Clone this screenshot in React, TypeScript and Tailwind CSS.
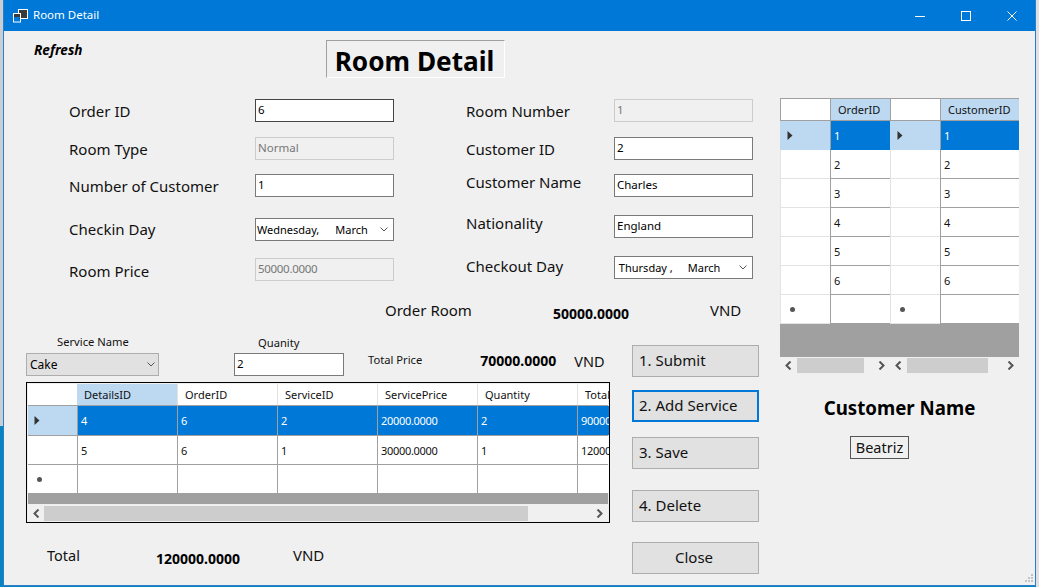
import React from "react";

const F = "font-['Noto_Sans','Open_Sans',sans-serif]";

function Tb({ v, off, w = "w-[139px]", dark, num }: { v: string; off?: boolean; w?: string; dark?: boolean; num?: boolean }) {
  return (
    <div className={`${w} h-[23px] border px-[2px] pb-[2px] flex items-center text-[11.5px] leading-none ${num ? "tracking-[-0.3px]" : ""} ${off ? "border-[#cccccc] bg-[#f0f0f0] text-[#777777]" : dark ? "border-[#444444] bg-white text-black" : "border-[#7a7a7a] bg-white text-black"}`}>
      {v}
    </div>
  );
}

function Chevron({ className = "" }: { className?: string }) {
  return (
    <svg width="8" height="5" viewBox="0 0 8 5" className={className} fill="none" stroke="#555555" strokeWidth="1">
      <path d="M0.5 0.5 L4 4 L7.5 0.5" />
    </svg>
  );
}

function DateBox({ a, b, gap }: { a: string; b: string; gap: string }) {
  return (
    <div className="w-[139px] h-[23px] border border-[#7a7a7a] bg-white flex items-center text-[11px] leading-none text-black pl-[1px] pr-[5px] whitespace-pre">
      <span>{a}</span>
      <span className={gap}>{b}</span>
      <Chevron className="ml-auto" />
    </div>
  );
}

function FormRow({ label, labelClass = "", w, mt, children }: { label: string; labelClass?: string; w: string; mt: string; children: React.ReactNode }) {
  return (
    <div className={`flex items-center h-[23px] ${mt}`}>
      <span className={`${w} text-[15px] leading-none whitespace-nowrap text-[#111111] ${labelClass}`}>{label}</span>
      {children}
    </div>
  );
}

function Arrow() {
  return (
    <svg width="6" height="9" viewBox="0 0 6 9">
      <path d="M0.5 0 L5.5 4.5 L0.5 9 Z" fill="#333333" />
    </svg>
  );
}

function Star() {
  return <span className="block w-[5px] h-[5px] ml-[3px] rounded-full bg-[#555555]" />;
}

function ScrollArrow({ dir }: { dir: "l" | "r" }) {
  return (
    <svg width="7" height="9" viewBox="0 0 7 9" fill="none" stroke="#555555" strokeWidth="2">
      <path d={dir === "l" ? "M5.5 0.5 L1.5 4.5 L5.5 8.5" : "M1.5 0.5 L5.5 4.5 L1.5 8.5"} />
    </svg>
  );
}

function SideGrid({ title, thumb, colW }: { title: string; thumb: string; colW: string }) {
  const rows = ["1", "2", "3", "4", "5", "6", ""];
  return (
    <div className={`flex flex-col ${colW}`}>
      <div className="h-[23px] flex border-y border-[#a0a0a0] bg-white shrink-0">
        <div className="w-[50px] shrink-0 border-l border-[#a0a0a0] bg-white" />
        <div className="flex-1 bg-[#bcd9f1] border-l border-[#a0a0a0] text-[11px] leading-none flex items-center pl-[7px] text-[#111111] whitespace-nowrap">{title}</div>
      </div>
      {rows.map((r, i) => (
        <div key={i} className="h-[29px] flex bg-white shrink-0">
          <div className={`w-[50px] shrink-0 border-l border-b flex items-center pl-[6px] ${i === 0 ? "bg-[#bcd9f1] border-[#bcd9f1]" : "border-[#e3e3e3]"}`}>
            {i === 0 ? <Arrow /> : i === 6 ? <Star /> : null}
          </div>
          <div className={`flex-1 border-l border-[#a0a0a0] border-b flex items-center pl-[3px] text-[11px] leading-none ${i === 0 ? "bg-[#0078d7] text-white border-b-[#0078d7]" : "border-b-[#a0a0a0] text-[#111111]"}`}>
            {r}
          </div>
        </div>
      ))}
      <div className="h-[33px] bg-[#a0a0a0] shrink-0" />
      <div className="h-[17px] flex items-center px-[5px] shrink-0 bg-[#f0f0f0]">
        <ScrollArrow dir="l" />
        <div className={`h-[15px] bg-[#cdcdcd] ml-[5px] ${thumb}`} />
        <span className="ml-auto"><ScrollArrow dir="r" /></span>
      </div>
    </div>
  );
}

function Cell({ w, className = "", children }: { w: string; className?: string; children?: React.ReactNode }) {
  return <div className={`${w} shrink-0 h-full flex items-center overflow-hidden whitespace-nowrap ${className}`}>{children}</div>;
}

function ServiceGrid() {
  const cols = ["w-[100px]", "w-[100px]", "w-[100px]", "w-[100px]", "w-[100px]", "w-[32px]"];
  const heads = ["DetailsID", "OrderID", "ServiceID", "ServicePrice", "Quantity", "Total"];
  const rows = [
    ["4", "6", "2", "20000.0000", "2", "90000.0000"],
    ["5", "6", "1", "30000.0000", "1", "120000.0000"],
    ["", "", "", "", "", ""],
  ];
  return (
    <div className="w-[584px] h-[141px] border border-black mt-[5px] p-[1px] flex flex-col bg-[#f0f0f0] text-[11px] leading-none text-[#111111]">
      <div className="h-[21px] flex bg-white shrink-0">
        <Cell w="w-[49px]" />
        {heads.map((h, i) => (
          <Cell key={h} w={cols[i]} className={`pl-[7px] ${i === 0 ? "bg-[#bcd9f1]" : "border-l border-[#e3e3e3]"}`}>{h}</Cell>
        ))}
      </div>
      {rows.map((r, ri) => (
        <div key={ri} className={`flex shrink-0 border-t border-[#a0a0a0] ${ri === 0 ? "h-[30px]" : "h-[29px] bg-white"}`}>
          <Cell w="w-[49px]" className={`pl-[6px] ${ri === 0 ? "bg-[#bcd9f1]" : "bg-white"}`}>
            {ri === 0 ? <Arrow /> : ri === 2 ? <Star /> : null}
          </Cell>
          {r.map((c, ci) => (
            <Cell key={ci} w={cols[ci]} className={`pl-[3px] border-l border-[#a0a0a0] ${c.length > 5 ? "tracking-[-0.3px]" : ""} ${ri === 0 ? "bg-[#0078d7] text-white" : "bg-white"}`}>{c}</Cell>
          ))}
        </div>
      ))}
      <div className="h-[11px] bg-[#a0a0a0] shrink-0" />
      <div className="h-[16px] flex items-center px-[5px] shrink-0 mt-[1px]">
        <ScrollArrow dir="l" />
        <div className="w-[484px] h-[15px] bg-[#cdcdcd] ml-[4px]" />
        <span className="ml-auto"><ScrollArrow dir="r" /></span>
      </div>
    </div>
  );
}

function Btn({ t, mt, focus, center }: { t: string; mt: string; focus?: boolean; center?: boolean }) {
  return (
    <div className={`w-[127px] h-[32px] shrink-0 bg-[#e1e1e1] flex items-center pb-[2px] text-[15px] leading-none text-[#111111] ${mt} ${focus ? "border-2 border-[#0078d7] pl-[5px]" : "border border-[#adadad]"} ${center ? "justify-center pr-[3px]" : focus ? "" : "pl-[6px]"}`}>
      {t}
    </div>
  );
}

export default function App() {
  return (
    <div className={`relative w-[1039px] h-[587px] overflow-hidden bg-[#0a84c0] ${F} flex`}>
      <div className="w-[3px] shrink-0 flex flex-col">
        <div className="h-[426px] bg-[#c9ced2]" />
        <div className="flex-1 bg-[#0a84c0]" />
      </div>
      <div className="w-[1033px] h-[586px] border border-t-0 border-[#2b7fc9] flex flex-col bg-[#f0f0f0] shrink-0">
        <div className="h-[31px] shrink-0 bg-[#0078d7] flex items-center text-white text-[11.5px] pl-[9px]">
          <svg width="15" height="14" viewBox="0 0 15 14" fill="none" className="mr-[5px]">
            <rect x="5.5" y="0.5" width="9" height="9" fill="#3a3a3a" stroke="#ffffff" />
            <rect x="0.5" y="4.5" width="7" height="8.5" fill="#0078d7" stroke="#ffffff" />
            <rect x="1" y="5" width="6" height="3" fill="#3a3a3a" />
            <rect x="6" y="9" width="1" height="1" fill="#3a3a3a" />
          </svg>
          <span className="pb-[2px]">Room Detail</span>
          <div className="ml-auto flex items-center h-full">
            <div className="w-[46px] flex justify-center">
              <svg width="10" height="10" viewBox="0 0 10 10"><path d="M0 5.5 H10" stroke="#ffffff" strokeWidth="1" /></svg>
            </div>
            <div className="w-[46px] flex justify-center">
              <svg width="10" height="10" viewBox="0 0 10 10" fill="none"><rect x="0.5" y="0.5" width="9" height="9" stroke="#ffffff" /></svg>
            </div>
            <div className="w-[46px] flex justify-center">
              <svg width="10" height="10" viewBox="0 0 10 10" fill="none"><path d="M0.5 0.5 L9.5 9.5 M9.5 0.5 L0.5 9.5" stroke="#ffffff" /></svg>
            </div>
          </div>
        </div>

        <div className="flex flex-1 min-h-0 pl-[22px]">
          <div className="w-[734px] shrink-0 flex flex-col">
            {/* header */}
            <div className="h-[47px] flex mt-[9px] shrink-0">
              <span className="ml-[8px] mt-[1px] w-[50px] h-[18px] italic font-bold text-[13.5px] leading-[18px] text-black whitespace-nowrap">Refresh</span>
              <div className="ml-[242px] w-[179px] h-[38px] pt-[4px] pr-[2px] border border-t-[#a0a0a0] border-l-[#a0a0a0] border-r-white border-b-white flex items-center justify-center text-[26.2px] font-bold leading-none text-black whitespace-nowrap">
                Room Detail
              </div>
            </div>
            {/* form */}
            <div className="flex pt-[12px] shrink-0">
              <div className="pl-[43px] w-[440px]">
                <FormRow w="w-[186px]" label="Order ID" mt="" labelClass="pt-[2px]"><Tb v="6" dark /></FormRow>
                <FormRow w="w-[186px]" label="Room Type" mt="mt-[15px]" labelClass="pt-[2px]"><Tb v="Normal" off /></FormRow>
                <FormRow w="w-[186px]" label="Number of Customer" mt="mt-[14px]" labelClass="pt-[2px]"><Tb v="1" /></FormRow>
                <FormRow w="w-[186px]" label="Checkin Day" mt="mt-[21px]"><DateBox a="Wednesday," b="March" gap="ml-[16px]" /></FormRow>
                <FormRow w="w-[186px]" label="Room Price" mt="mt-[17px]" labelClass="pt-[4px]"><Tb v="50000.0000" off num /></FormRow>
              </div>
              <div className="w-[288px]">
                <FormRow w="w-[148px]" label="Room Number" mt="" labelClass="pt-[2px]"><Tb v="1" off /></FormRow>
                <FormRow w="w-[148px]" label="Customer ID" mt="mt-[15px]" labelClass="pt-[2px]"><Tb v="2" /></FormRow>
                <FormRow w="w-[148px]" label="Customer Name" mt="mt-[14px]" labelClass="pb-[6px]"><Tb v="Charles" /></FormRow>
                <FormRow w="w-[148px]" label="Nationality" mt="mt-[18px]" labelClass="pb-[7px]"><Tb v="England" /></FormRow>
                <FormRow w="w-[148px]" label="Checkout Day" mt="mt-[18px]" labelClass="pb-[3px]"><DateBox a=" Thursday ," b="March" gap="ml-[15px]" /></FormRow>
              </div>
            </div>
            {/* order room */}
            <div className="flex items-center h-[20px] mt-[20px] pl-[359px] shrink-0 whitespace-nowrap">
              <span className="pb-[2px] text-[15px] leading-none text-[#111111]">Order Room</span>
              <span className="ml-[81px] mt-[6px] text-[14px] font-bold leading-none text-black">50000.0000</span>
              <span className="ml-[81px] pb-[2px] text-[15px] leading-none text-[#111111]">VND</span>
            </div>
            {/* bottom: service + buttons */}
            <div className="flex shrink-0">
              <div className="w-[606px] shrink-0 flex flex-col">
                <div className="flex h-[43px] mt-[13px] whitespace-nowrap">
                  <div className="w-[208px] flex flex-col shrink-0">
                    <span className="ml-[31px] h-[19px] text-[11.2px] leading-[16px] text-[#111111]">Service Name</span>
                    <div className="w-[133px] h-[23px] bg-[#e1e1e1] border border-[#adadad] flex items-center px-[3px] text-[12px] leading-none text-black">
                      Cake
                      <Chevron className="ml-auto" />
                    </div>
                  </div>
                  <div className="w-[134px] flex flex-col shrink-0">
                    <span className="ml-[24px] h-[19px] pt-[1px] text-[11.2px] leading-[16px] text-[#111111]">Quanity</span>
                    <Tb v="2" w="w-[110px]" />
                  </div>
                  <span className="mt-[20px] text-[11.2px] leading-none text-[#111111]">Total Price</span>
                  <span className="ml-[58px] mt-[20px] text-[14px] font-bold leading-none text-black">70000.0000</span>
                  <span className="ml-[18px] mt-[20px] text-[14.5px] leading-none text-[#111111]">VND</span>
                </div>
                <ServiceGrid />
                <div className="flex h-[20px] mt-[23px] pl-[21px] items-start whitespace-nowrap">
                  <span className="mt-[2px] text-[14.5px] leading-none text-[#111111]">Total</span>
                  <span className="ml-[76px] mt-[6px] text-[14px] font-bold leading-none text-black">120000.0000</span>
                  <span className="ml-[53px] mt-[2px] text-[15px] leading-none text-[#111111]">VND</span>
                </div>
              </div>
              <div className="flex flex-col w-[127px] pt-[24px]">
                <Btn t="1. Submit" mt="" />
                <Btn t="2. Add Service" mt="mt-[13px]" focus />
                <Btn t="3. Save" mt="mt-[15px]" />
                <Btn t="4. Delete" mt="mt-[21px]" />
                <Btn t="Close" mt="mt-[20px]" center />
              </div>
            </div>
          </div>
          {/* right */}
          <div className="w-[239px] ml-[20px] pt-[67px] flex flex-col shrink-0">
            <div className="flex">
              <SideGrid title="OrderID" thumb="w-[67px]" colW="w-[110px]" />
              <SideGrid title="CustomerID" thumb="w-[81px]" colW="w-[129px]" />
            </div>
            <div className="mt-[25px] text-center text-[18.7px] font-bold leading-none text-black whitespace-nowrap">Customer Name</div>
            <div className="mt-[18px] ml-[70px] w-[59px] h-[23px] border border-[#555555] flex items-center justify-center text-[14.5px] leading-none text-[#111111]">Beatriz</div>
          </div>
        </div>
      </div>
      <div className="flex-1 bg-[#dfe1e3]" />
      {/* resize grip */}
      <svg width="10" height="10" viewBox="0 0 10 10" className="absolute left-[1024px] top-[574px]" fill="#c4c4c4">
        <rect x="7" y="0" width="2" height="2" />
        <rect x="4" y="3" width="2" height="2" />
        <rect x="7" y="3" width="2" height="2" />
        <rect x="1" y="6" width="2" height="2" />
        <rect x="4" y="6" width="2" height="2" />
        <rect x="7" y="6" width="2" height="2" />
      </svg>
    </div>
  );
}
